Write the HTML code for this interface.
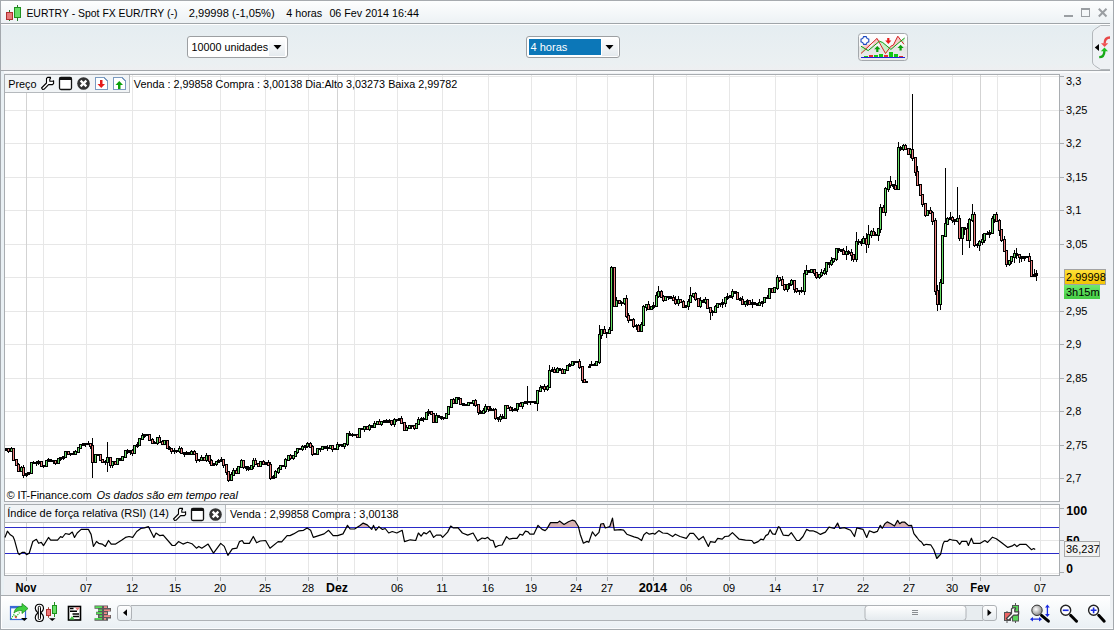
<!DOCTYPE html>
<html><head><meta charset="utf-8">
<style>
html,body{margin:0;padding:0;width:1114px;height:630px;overflow:hidden;background:#eef0f3}
svg{position:absolute;left:0;top:0;display:block}
text{font-family:"Liberation Sans",sans-serif;font-size:11px;fill:#000}
</style></head><body>
<svg width="1114" height="630" viewBox="0 0 1114 630" shape-rendering="crispEdges">
<defs>
<linearGradient id="gTitle" x1="0" y1="0" x2="0" y2="1"><stop offset="0" stop-color="#fdfefe"/><stop offset="1" stop-color="#ecf1f4"/></linearGradient>
<linearGradient id="gTool" x1="0" y1="0" x2="0" y2="1"><stop offset="0" stop-color="#e5edf1"/><stop offset="0.85" stop-color="#ebf0f2"/><stop offset="1" stop-color="#eeeff1"/></linearGradient>
<linearGradient id="gBot" x1="0" y1="0" x2="0" y2="1"><stop offset="0" stop-color="#ffffff"/><stop offset="1" stop-color="#eaf0f4"/></linearGradient>
<linearGradient id="gYel" x1="0" y1="0" x2="0" y2="1"><stop offset="0" stop-color="#ffe23a"/><stop offset="1" stop-color="#f2c200"/></linearGradient>
<linearGradient id="gGrn" x1="0" y1="0" x2="0" y2="1"><stop offset="0" stop-color="#6ee86e"/><stop offset="1" stop-color="#44cc44"/></linearGradient>
<linearGradient id="gBtn" x1="0" y1="0" x2="0" y2="1"><stop offset="0" stop-color="#ffffff"/><stop offset="1" stop-color="#e4eaee"/></linearGradient>
</defs>
<!-- window frame -->
<rect x="0" y="0" width="1114" height="630" fill="#eef0f3"/>
<!-- title bar -->
<rect x="1" y="1" width="1112" height="23" fill="url(#gTitle)"/>
<path d="M0 0.5H1114" stroke="#a7abaf"/>
<path d="M1 23.5H1110" stroke="#a0a5a9"/>
<path d="M1 24.5H1110" stroke="#ffffff"/>
<!-- toolbar -->
<rect x="1" y="25" width="1109" height="45" fill="url(#gTool)"/>
<path d="M1 70.5H1110" stroke="#a4a8ac"/>
<path d="M1 71.5H1110M1 72.5H1110" stroke="#f9fafb"/>
<!-- left strip -->
<rect x="1" y="71" width="3" height="524" fill="#e9f0f4"/>
<!-- bottom toolbar -->
<path d="M1 595.5H1110" stroke="#a9adb1"/>
<rect x="1" y="596" width="1109" height="32" fill="url(#gBot)"/>
<!-- borders -->
<path d="M0.5 0V630" stroke="#a3a8ad"/>
<path d="M1 628.5H1113" stroke="#fbfcfd"/>
<path d="M0 629.5H1114" stroke="#a5aaae"/>
<path d="M1.5 596V628" stroke="#ffffff"/>
<rect x="1110" y="24" width="3" height="604" fill="#eef1f4"/>
<path d="M1113.5 0V630" stroke="#a3a8ad"/>
<rect x="4.5" y="74.5" width="1055" height="427" fill="#fff" stroke="#a9adb1"/><path d="M5 76.5H1059" stroke="#e7e7e7"/><path d="M5 110.5H1059" stroke="#e7e7e7"/><path d="M5 143.5H1059" stroke="#e7e7e7"/><path d="M5 177.5H1059" stroke="#e7e7e7"/><path d="M5 210.5H1059" stroke="#e7e7e7"/><path d="M5 244.5H1059" stroke="#e7e7e7"/><path d="M5 277.5H1059" stroke="#e7e7e7"/><path d="M5 311.5H1059" stroke="#e7e7e7"/><path d="M5 344.5H1059" stroke="#e7e7e7"/><path d="M5 378.5H1059" stroke="#e7e7e7"/><path d="M5 411.5H1059" stroke="#e7e7e7"/><path d="M5 445.5H1059" stroke="#e7e7e7"/><path d="M5 478.5H1059" stroke="#e7e7e7"/><path d="M26.5 75V501" stroke="#d3d3d3"/><path d="M43.5 75V501" stroke="#e7e7e7"/><path d="M86.5 75V501" stroke="#e7e7e7"/><path d="M132.5 75V501" stroke="#e7e7e7"/><path d="M175.5 75V501" stroke="#e7e7e7"/><path d="M220.5 75V501" stroke="#e7e7e7"/><path d="M265.5 75V501" stroke="#e7e7e7"/><path d="M308.5 75V501" stroke="#e7e7e7"/><path d="M337.5 75V501" stroke="#d3d3d3"/><path d="M354.5 75V501" stroke="#e7e7e7"/><path d="M397.5 75V501" stroke="#e7e7e7"/><path d="M442.5 75V501" stroke="#e7e7e7"/><path d="M488.5 75V501" stroke="#e7e7e7"/><path d="M531.5 75V501" stroke="#e7e7e7"/><path d="M576.5 75V501" stroke="#e7e7e7"/><path d="M607.5 75V501" stroke="#e7e7e7"/><path d="M653.5 75V501" stroke="#d3d3d3"/><path d="M686.5 75V501" stroke="#e7e7e7"/><path d="M729.5 75V501" stroke="#e7e7e7"/><path d="M775.5 75V501" stroke="#e7e7e7"/><path d="M817.5 75V501" stroke="#e7e7e7"/><path d="M863.5 75V501" stroke="#e7e7e7"/><path d="M909.5 75V501" stroke="#e7e7e7"/><path d="M952.5 75V501" stroke="#e7e7e7"/><path d="M980.5 75V501" stroke="#d3d3d3"/><path d="M997.5 75V501" stroke="#e7e7e7"/><path d="M1040.5 75V501" stroke="#e7e7e7"/><rect x="4.5" y="504.5" width="1055" height="71" fill="#fff" stroke="#a9adb1"/><path d="M26.5 505V575" stroke="#d3d3d3"/><path d="M43.5 505V575" stroke="#e7e7e7"/><path d="M86.5 505V575" stroke="#e7e7e7"/><path d="M132.5 505V575" stroke="#e7e7e7"/><path d="M175.5 505V575" stroke="#e7e7e7"/><path d="M220.5 505V575" stroke="#e7e7e7"/><path d="M265.5 505V575" stroke="#e7e7e7"/><path d="M308.5 505V575" stroke="#e7e7e7"/><path d="M337.5 505V575" stroke="#d3d3d3"/><path d="M354.5 505V575" stroke="#e7e7e7"/><path d="M397.5 505V575" stroke="#e7e7e7"/><path d="M442.5 505V575" stroke="#e7e7e7"/><path d="M488.5 505V575" stroke="#e7e7e7"/><path d="M531.5 505V575" stroke="#e7e7e7"/><path d="M576.5 505V575" stroke="#e7e7e7"/><path d="M607.5 505V575" stroke="#e7e7e7"/><path d="M653.5 505V575" stroke="#d3d3d3"/><path d="M686.5 505V575" stroke="#e7e7e7"/><path d="M729.5 505V575" stroke="#e7e7e7"/><path d="M775.5 505V575" stroke="#e7e7e7"/><path d="M817.5 505V575" stroke="#e7e7e7"/><path d="M863.5 505V575" stroke="#e7e7e7"/><path d="M909.5 505V575" stroke="#e7e7e7"/><path d="M952.5 505V575" stroke="#e7e7e7"/><path d="M980.5 505V575" stroke="#d3d3d3"/><path d="M997.5 505V575" stroke="#e7e7e7"/><path d="M1040.5 505V575" stroke="#e7e7e7"/><path d="M5 540.5H1059" stroke="#e7e7e7"/><path d="M5 573.5H1059" stroke="#e7e7e7"/><path d="M5 508.5H1059" stroke="#e7e7e7"/><path d="M6.5 449V451M8.5 449V453M11.5 447V451M13.5 449V460M16.5 459V465M18.5 463V472M21.5 466V471M23.5 465V478M26.5 474V477M28.5 473V474M31.5 463V474M33.5 461V464M36.5 461V466M38.5 460V465M41.5 461V466M43.5 466V468M46.5 461V467M48.5 458V462M50.5 459V462M53.5 461V464M55.5 461V465M58.5 458V464M60.5 457V461M63.5 456V460M65.5 451V457M68.5 451V454M70.5 454V456M73.5 451V455M75.5 450V455M78.5 447V452M80.5 444V449M83.5 443V445M85.5 443V447M88.5 441V445M90.5 443V449M92.5 438V478M95.5 455V463M97.5 454V455M100.5 454V461M102.5 459V462M105.5 460V465M107.5 442V472M110.5 457V468M112.5 461V468M115.5 462V464M117.5 459V464M120.5 459V461M122.5 457V461M125.5 451V458M127.5 449V454M130.5 451V455M132.5 449V456M134.5 446V454M137.5 442V448M139.5 438V446M142.5 433V440M144.5 435V438M147.5 435V436M149.5 435V440M152.5 438V443M154.5 441V444M157.5 438V445M159.5 435V443M162.5 440V445M164.5 441V445M167.5 440V449M169.5 446V449M171.5 448V454M174.5 448V454M176.5 451V453M179.5 446V453M181.5 447V454M184.5 452V457M186.5 451V455M189.5 452V454M191.5 450V455M194.5 450V454M196.5 453V463M199.5 460V462M201.5 455V460M204.5 457V461M206.5 453V462M209.5 455V464M211.5 459V465M213.5 464V466M216.5 462V466M218.5 459V462M221.5 457V462M223.5 460V468M226.5 464V475M228.5 471V482M231.5 472V481M233.5 468V476M236.5 468V473M238.5 466V473M241.5 459V468M243.5 461V469M246.5 466V471M248.5 466V471M251.5 466V469M253.5 458V469M255.5 458V464M258.5 464V467M260.5 462V467M263.5 460V465M265.5 462V464M268.5 460V466M270.5 462V480M273.5 475V479M275.5 470V477M278.5 467V474M280.5 465V469M283.5 466V466M285.5 458V469M288.5 456V461M290.5 454V460M293.5 456V460M295.5 452V457M297.5 449V454M300.5 449V450M302.5 445V451M305.5 446V450M307.5 442V448M310.5 442V447M312.5 445V456M315.5 454V455M317.5 449V455M320.5 449V452M322.5 447V449M325.5 447V448M327.5 445V451M330.5 445V448M332.5 446V452M335.5 448V450M337.5 442V449M339.5 444V447M342.5 444V447M344.5 444V449M347.5 433V446M349.5 431V436M352.5 433V437M354.5 435V436M357.5 435V437M359.5 428V437M362.5 428V430M364.5 426V432M367.5 426V430M369.5 424V431M372.5 425V427M374.5 421V427M377.5 422V425M379.5 419V424M381.5 422V426M384.5 421V423M386.5 419V422M389.5 419V423M391.5 420V426M394.5 418V427M396.5 420V422M399.5 419V420M401.5 416V424M404.5 423V431M406.5 425V430M409.5 426V429M411.5 426V429M414.5 426V430M416.5 423V428M418.5 417V425M421.5 417V421M423.5 417V422M426.5 413V420M428.5 409V416M431.5 411V415M433.5 414V422M436.5 413V423M438.5 416V417M441.5 416V420M443.5 417V420M446.5 413V418M448.5 407V415M451.5 399V408M453.5 398V404M456.5 397V403M458.5 398V400M460.5 398V405M463.5 404V405M465.5 405V405M468.5 403V405M470.5 403V404M473.5 400V406M475.5 399V407M478.5 405V415M480.5 410V414M483.5 408V414M485.5 404V413M488.5 407V412M490.5 406V411M493.5 408V410M495.5 408V420M498.5 418V422M500.5 414V422M502.5 414V418M505.5 406V418M507.5 406V409M510.5 406V410M512.5 407V412M515.5 408V411M517.5 404V412M520.5 402V406M522.5 403V409M525.5 401V403M527.5 386V405M530.5 402V405M532.5 401V403M535.5 402V404M537.5 390V411M540.5 385V391M542.5 387V389M544.5 384V392M547.5 385V391M549.5 365V388M552.5 367V372M554.5 367V373M557.5 367V373M559.5 368V370M562.5 368V373M564.5 370V374M567.5 365V370M569.5 363V367M572.5 362V365M574.5 361V365M577.5 361V362M579.5 359V369M582.5 367V383M584.5 379V383M586.5 382V382M589.5 364V368M591.5 361V366M594.5 363V366M596.5 361V366M599.5 325V364M601.5 329V339M604.5 326V334M606.5 333V338M609.5 327V333M611.5 266V331M614.5 267V306M616.5 297V307M619.5 300V304M621.5 301V306M624.5 298V305M626.5 295V318M628.5 313V323M631.5 320V321M633.5 318V328M636.5 324V330M638.5 324V331M641.5 322V332M643.5 305V326M646.5 304V311M648.5 301V310M651.5 306V310M653.5 302V309M656.5 292V307M658.5 286V298M661.5 290V298M663.5 295V302M665.5 296V301M668.5 296V300M670.5 296V299M673.5 295V301M675.5 296V305M678.5 296V306M680.5 299V303M683.5 300V308M685.5 305V308M688.5 299V310M690.5 287V302M693.5 293V298M695.5 292V301M698.5 299V307M700.5 297V308M703.5 299V302M705.5 297V304M707.5 299V308M710.5 307V320M712.5 310V316M715.5 305V312M717.5 304V307M720.5 303V307M722.5 299V308M725.5 297V307M727.5 293V300M730.5 296V298M732.5 289V299M735.5 291V294M737.5 293V299M740.5 297V301M742.5 296V305M745.5 301V307M747.5 299V306M749.5 301V304M752.5 299V308M754.5 302V305M757.5 303V306M759.5 299V306M762.5 301V307M764.5 298V303M767.5 295V298M769.5 288V299M772.5 288V293M774.5 287V293M777.5 275V290M779.5 277V282M782.5 276V286M784.5 284V291M787.5 285V292M789.5 284V289M791.5 279V286M794.5 280V293M796.5 289V293M799.5 290V295M801.5 287V293M804.5 270V295M806.5 265V275M809.5 271V272M811.5 270V273M814.5 270V276M816.5 272V279M819.5 274V279M821.5 269V277M824.5 268V275M826.5 262V275M829.5 263V268M831.5 257V266M833.5 259V263M836.5 249V261M838.5 249V253M841.5 249V252M843.5 248V254M846.5 246V260M848.5 250V255M851.5 249V261M853.5 255V262M856.5 232V262M858.5 239V245M861.5 239V246M863.5 236V244M866.5 233V253M868.5 225V248M871.5 230V238M873.5 228V235M875.5 232V236M878.5 229V241M880.5 204V233M883.5 205V212M885.5 187V216M888.5 182V192M890.5 176V188M893.5 184V189M895.5 180V190M898.5 142V190M900.5 146V151M903.5 144V151M905.5 144V150M908.5 148V155M910.5 148V158M912.5 94V161M915.5 157V176M917.5 166V185M920.5 185V195M922.5 194V207M925.5 204V217M927.5 211V216M930.5 207V214M932.5 211V225M935.5 218V295M937.5 285V311M940.5 279V310M942.5 235V283M945.5 168V236M947.5 217V225M950.5 212V220M952.5 216V223M954.5 219V225M957.5 187V221M959.5 215V241M962.5 228V255M964.5 227V235M967.5 223V241M969.5 218V248M972.5 204V222M974.5 212V247M977.5 243V248M979.5 240V251M982.5 234V245M984.5 234V243M987.5 231V234M989.5 230V238M992.5 216V234M994.5 215V223M996.5 212V221M999.5 219V236M1001.5 229V242M1004.5 236V252M1006.5 251V267M1009.5 260V266M1011.5 257V264M1014.5 250V263M1016.5 248V259M1019.5 254V263M1021.5 256V262M1024.5 256V261M1026.5 256V258M1029.5 253V262M1031.5 261V277M1034.5 269V277M1036.5 270V281" stroke="#000" fill="none"/><path d="M5 448h3v3h-3zM7 448h3v4h-3zM10 448h3v4h-3zM12 448h3v13h-3zM15 459h3v7h-3zM17 464h3v8h-3zM20 467h3v5h-3zM22 467h3v9h-3zM25 473h3v3h-3zM27 472h3v3h-3zM30 462h3v12h-3zM32 462h3v2h-3zM35 462h3v2h-3zM37 461h3v3h-3zM40 461h3v6h-3zM42 465h3v2h-3zM45 460h3v7h-3zM47 459h3v3h-3zM49 459h3v3h-3zM52 460h3v2h-3zM54 460h3v4h-3zM57 458h3v6h-3zM59 457h3v3h-3zM62 456h3v3h-3zM64 451h3v7h-3zM67 451h3v4h-3zM69 453h3v2h-3zM72 453h3v2h-3zM74 451h3v4h-3zM77 447h3v6h-3zM79 444h3v5h-3zM82 443h3v3h-3zM84 443h3v2h-3zM87 443h3v2h-3zM89 443h3v4h-3zM91 445h3v18h-3zM94 454h3v9h-3zM96 454h3v2h-3zM99 454h3v7h-3zM101 459h3v4h-3zM104 461h3v2h-3zM106 457h3v6h-3zM109 457h3v9h-3zM111 461h3v5h-3zM114 461h3v4h-3zM116 458h3v7h-3zM119 458h3v3h-3zM121 456h3v5h-3zM124 450h3v8h-3zM126 450h3v3h-3zM129 450h3v3h-3zM131 450h3v4h-3zM133 445h3v9h-3zM136 444h3v3h-3zM138 438h3v8h-3zM141 435h3v5h-3zM143 434h3v3h-3zM146 434h3v2h-3zM148 434h3v7h-3zM151 439h3v5h-3zM153 442h3v2h-3zM156 437h3v7h-3zM158 437h3v6h-3zM161 441h3v4h-3zM163 440h3v5h-3zM166 440h3v9h-3zM168 447h3v3h-3zM170 448h3v4h-3zM173 450h3v2h-3zM175 450h3v2h-3zM178 448h3v4h-3zM180 448h3v6h-3zM183 452h3v3h-3zM185 452h3v3h-3zM188 452h3v3h-3zM190 451h3v4h-3zM193 451h3v4h-3zM195 453h3v8h-3zM198 459h3v2h-3zM200 457h3v4h-3zM203 457h3v4h-3zM205 455h3v6h-3zM208 455h3v7h-3zM210 460h3v6h-3zM212 463h3v3h-3zM215 461h3v4h-3zM217 460h3v3h-3zM220 459h3v3h-3zM222 459h3v7h-3zM225 464h3v9h-3zM227 471h3v10h-3zM230 474h3v7h-3zM232 470h3v6h-3zM235 470h3v4h-3zM237 466h3v8h-3zM240 460h3v8h-3zM242 460h3v8h-3zM245 466h3v3h-3zM247 467h3v3h-3zM250 465h3v5h-3zM252 460h3v7h-3zM254 460h3v5h-3zM257 463h3v4h-3zM259 461h3v6h-3zM262 461h3v4h-3zM264 462h3v3h-3zM267 462h3v4h-3zM269 464h3v15h-3zM272 476h3v3h-3zM274 471h3v7h-3zM277 468h3v5h-3zM279 465h3v5h-3zM282 465h3v2h-3zM284 459h3v8h-3zM287 455h3v6h-3zM289 455h3v4h-3zM292 455h3v4h-3zM294 451h3v6h-3zM296 448h3v5h-3zM299 448h3v2h-3zM301 446h3v4h-3zM304 445h3v3h-3zM306 443h3v4h-3zM309 443h3v5h-3zM311 446h3v9h-3zM314 453h3v2h-3zM316 448h3v7h-3zM319 448h3v2h-3zM321 446h3v4h-3zM324 446h3v3h-3zM326 447h3v2h-3zM329 445h3v4h-3zM331 445h3v5h-3zM334 448h3v2h-3zM336 444h3v6h-3zM338 444h3v2h-3zM341 444h3v3h-3zM343 443h3v4h-3zM346 433h3v12h-3zM348 433h3v3h-3zM351 434h3v2h-3zM353 434h3v2h-3zM356 434h3v4h-3zM358 428h3v10h-3zM361 428h3v2h-3zM363 426h3v4h-3zM366 426h3v4h-3zM368 425h3v5h-3zM371 425h3v3h-3zM373 423h3v5h-3zM376 421h3v4h-3zM378 421h3v4h-3zM380 421h3v4h-3zM383 420h3v3h-3zM385 420h3v3h-3zM388 420h3v3h-3zM390 420h3v5h-3zM393 419h3v6h-3zM395 419h3v2h-3zM398 418h3v3h-3zM400 418h3v6h-3zM403 422h3v9h-3zM405 427h3v4h-3zM408 425h3v4h-3zM410 425h3v2h-3zM413 425h3v4h-3zM415 423h3v6h-3zM417 419h3v6h-3zM420 418h3v3h-3zM422 418h3v2h-3zM425 412h3v8h-3zM427 411h3v3h-3zM430 411h3v4h-3zM432 413h3v10h-3zM435 415h3v8h-3zM437 415h3v3h-3zM440 416h3v3h-3zM442 417h3v2h-3zM445 413h3v6h-3zM447 406h3v9h-3zM450 399h3v9h-3zM452 399h3v5h-3zM455 397h3v7h-3zM457 397h3v3h-3zM459 398h3v7h-3zM462 403h3v3h-3zM464 404h3v2h-3zM467 402h3v4h-3zM469 402h3v2h-3zM472 400h3v4h-3zM474 400h3v6h-3zM477 404h3v9h-3zM479 411h3v3h-3zM482 410h3v4h-3zM484 406h3v6h-3zM487 406h3v4h-3zM489 408h3v3h-3zM492 409h3v2h-3zM494 409h3v10h-3zM497 417h3v3h-3zM499 416h3v4h-3zM501 416h3v3h-3zM504 405h3v14h-3zM506 405h3v4h-3zM509 407h3v4h-3zM511 409h3v2h-3zM514 408h3v3h-3zM516 403h3v7h-3zM519 403h3v4h-3zM521 402h3v5h-3zM524 401h3v3h-3zM526 401h3v2h-3zM529 401h3v2h-3zM531 401h3v2h-3zM534 401h3v3h-3zM536 390h3v14h-3zM539 387h3v5h-3zM541 386h3v3h-3zM543 386h3v4h-3zM546 386h3v4h-3zM548 370h3v18h-3zM551 369h3v3h-3zM553 369h3v4h-3zM556 368h3v5h-3zM558 368h3v3h-3zM561 369h3v5h-3zM563 369h3v5h-3zM566 365h3v6h-3zM568 364h3v3h-3zM571 361h3v5h-3zM573 361h3v2h-3zM576 361h3v2h-3zM578 361h3v7h-3zM581 366h3v15h-3zM583 379h3v4h-3zM585 381h3v2h-3zM588 366h3v2h-3zM590 364h3v2h-3zM593 364h3v2h-3zM595 361h3v5h-3zM598 334h3v29h-3zM600 329h3v7h-3zM603 329h3v5h-3zM605 332h3v2h-3zM608 329h3v5h-3zM610 267h3v64h-3zM613 267h3v40h-3zM615 300h3v7h-3zM618 300h3v4h-3zM620 302h3v2h-3zM623 298h3v6h-3zM625 298h3v19h-3zM627 315h3v6h-3zM630 319h3v2h-3zM632 319h3v8h-3zM635 325h3v2h-3zM637 325h3v7h-3zM640 324h3v8h-3zM642 306h3v20h-3zM645 304h3v4h-3zM647 304h3v6h-3zM650 306h3v4h-3zM652 305h3v3h-3zM655 295h3v12h-3zM657 291h3v6h-3zM660 291h3v7h-3zM662 296h3v5h-3zM664 296h3v5h-3zM667 296h3v2h-3zM669 296h3v3h-3zM672 297h3v4h-3zM674 299h3v5h-3zM677 299h3v5h-3zM679 299h3v4h-3zM682 301h3v7h-3zM684 305h3v3h-3zM687 301h3v6h-3zM689 295h3v8h-3zM692 293h3v4h-3zM694 293h3v7h-3zM697 298h3v9h-3zM699 300h3v7h-3zM702 300h3v3h-3zM704 299h3v4h-3zM706 299h3v10h-3zM709 307h3v6h-3zM711 311h3v2h-3zM714 306h3v7h-3zM716 303h3v5h-3zM719 303h3v2h-3zM721 302h3v3h-3zM724 297h3v7h-3zM726 296h3v3h-3zM729 295h3v3h-3zM731 291h3v6h-3zM734 291h3v3h-3zM736 292h3v8h-3zM739 298h3v3h-3zM741 299h3v6h-3zM744 301h3v4h-3zM746 300h3v3h-3zM748 300h3v5h-3zM751 302h3v3h-3zM753 302h3v3h-3zM756 303h3v3h-3zM758 302h3v4h-3zM761 301h3v3h-3zM763 297h3v6h-3zM766 297h3v2h-3zM768 288h3v11h-3zM771 288h3v5h-3zM773 287h3v6h-3zM776 277h3v12h-3zM778 277h3v4h-3zM781 279h3v7h-3zM783 284h3v6h-3zM786 284h3v6h-3zM788 283h3v3h-3zM790 280h3v5h-3zM793 280h3v10h-3zM795 288h3v4h-3zM798 290h3v2h-3zM800 290h3v2h-3zM803 273h3v19h-3zM805 270h3v5h-3zM808 270h3v3h-3zM810 269h3v4h-3zM813 269h3v5h-3zM815 272h3v6h-3zM818 274h3v4h-3zM820 272h3v4h-3zM823 270h3v4h-3zM825 262h3v10h-3zM828 262h3v3h-3zM830 260h3v5h-3zM832 258h3v4h-3zM835 248h3v12h-3zM837 248h3v3h-3zM840 249h3v3h-3zM842 250h3v5h-3zM845 251h3v4h-3zM847 251h3v3h-3zM850 252h3v4h-3zM852 254h3v6h-3zM855 241h3v19h-3zM857 241h3v2h-3zM860 241h3v3h-3zM862 238h3v6h-3zM865 238h3v7h-3zM867 234h3v11h-3zM870 231h3v5h-3zM872 231h3v5h-3zM874 234h3v2h-3zM877 228h3v8h-3zM879 207h3v23h-3zM882 207h3v6h-3zM884 188h3v25h-3zM887 181h3v9h-3zM889 181h3v5h-3zM892 184h3v3h-3zM894 185h3v5h-3zM897 147h3v43h-3zM899 147h3v3h-3zM902 145h3v5h-3zM904 145h3v5h-3zM907 148h3v7h-3zM909 149h3v6h-3zM911 149h3v10h-3zM914 157h3v16h-3zM916 171h3v15h-3zM919 184h3v12h-3zM921 194h3v11h-3zM924 203h3v13h-3zM926 210h3v6h-3zM929 210h3v4h-3zM931 212h3v10h-3zM934 220h3v72h-3zM936 290h3v15h-3zM939 282h3v23h-3zM941 235h3v49h-3zM944 223h3v14h-3zM946 218h3v7h-3zM949 217h3v3h-3zM951 217h3v4h-3zM953 219h3v3h-3zM956 218h3v4h-3zM958 218h3v21h-3zM961 227h3v12h-3zM963 227h3v3h-3zM966 228h3v13h-3zM968 219h3v22h-3zM971 214h3v7h-3zM973 214h3v32h-3zM976 244h3v2h-3zM978 241h3v5h-3zM981 239h3v4h-3zM983 233h3v8h-3zM986 233h3v2h-3zM988 232h3v3h-3zM991 218h3v16h-3zM993 214h3v6h-3zM995 214h3v8h-3zM998 220h3v11h-3zM1000 229h3v12h-3zM1003 239h3v13h-3zM1005 250h3v15h-3zM1008 260h3v5h-3zM1010 256h3v6h-3zM1013 253h3v5h-3zM1015 253h3v3h-3zM1018 254h3v4h-3zM1020 256h3v3h-3zM1023 256h3v3h-3zM1025 256h3v2h-3zM1028 256h3v6h-3zM1030 260h3v17h-3zM1033 274h3v3h-3zM1035 273h3v3h-3z" fill="#000"/><path d="M11 449h1v2h-1zM21 468h1v3h-1zM31 463h1v10h-1zM46 461h1v5h-1zM58 459h1v4h-1zM65 452h1v5h-1zM75 452h1v2h-1zM78 448h1v4h-1zM80 445h1v3h-1zM95 455h1v7h-1zM107 458h1v4h-1zM112 462h1v3h-1zM117 459h1v5h-1zM122 457h1v3h-1zM125 451h1v6h-1zM134 446h1v7h-1zM139 439h1v6h-1zM142 436h1v3h-1zM157 438h1v5h-1zM164 441h1v3h-1zM179 449h1v2h-1zM191 452h1v2h-1zM201 458h1v2h-1zM206 456h1v4h-1zM216 462h1v2h-1zM231 475h1v5h-1zM233 471h1v4h-1zM238 467h1v6h-1zM241 461h1v6h-1zM251 466h1v3h-1zM253 461h1v5h-1zM260 462h1v4h-1zM275 472h1v5h-1zM278 469h1v3h-1zM280 466h1v3h-1zM285 460h1v6h-1zM288 456h1v4h-1zM293 456h1v2h-1zM295 452h1v4h-1zM297 449h1v3h-1zM302 447h1v2h-1zM307 444h1v2h-1zM317 449h1v5h-1zM322 447h1v2h-1zM330 446h1v2h-1zM337 445h1v4h-1zM344 444h1v2h-1zM347 434h1v10h-1zM359 429h1v8h-1zM364 427h1v2h-1zM369 426h1v3h-1zM374 424h1v3h-1zM377 422h1v2h-1zM381 422h1v2h-1zM394 420h1v4h-1zM406 428h1v2h-1zM409 426h1v2h-1zM416 424h1v4h-1zM418 420h1v4h-1zM426 413h1v6h-1zM436 416h1v6h-1zM446 414h1v4h-1zM448 407h1v7h-1zM451 400h1v7h-1zM456 398h1v5h-1zM468 403h1v2h-1zM473 401h1v2h-1zM483 411h1v2h-1zM485 407h1v4h-1zM500 417h1v2h-1zM505 406h1v12h-1zM517 404h1v5h-1zM522 403h1v3h-1zM537 391h1v12h-1zM540 388h1v3h-1zM547 387h1v2h-1zM549 371h1v16h-1zM557 369h1v3h-1zM564 370h1v3h-1zM567 366h1v4h-1zM572 362h1v3h-1zM596 362h1v3h-1zM599 335h1v27h-1zM601 330h1v5h-1zM609 330h1v3h-1zM611 268h1v62h-1zM616 301h1v5h-1zM624 299h1v4h-1zM641 325h1v6h-1zM643 307h1v18h-1zM646 305h1v2h-1zM651 307h1v2h-1zM656 296h1v10h-1zM658 292h1v4h-1zM665 297h1v3h-1zM678 300h1v3h-1zM688 302h1v4h-1zM690 296h1v6h-1zM693 294h1v2h-1zM700 301h1v5h-1zM705 300h1v2h-1zM715 307h1v5h-1zM717 304h1v3h-1zM725 298h1v5h-1zM732 292h1v4h-1zM745 302h1v2h-1zM759 303h1v2h-1zM764 298h1v4h-1zM769 289h1v9h-1zM774 288h1v4h-1zM777 278h1v10h-1zM787 285h1v4h-1zM791 281h1v3h-1zM804 274h1v17h-1zM806 271h1v3h-1zM811 270h1v2h-1zM819 275h1v2h-1zM821 273h1v2h-1zM824 271h1v2h-1zM826 263h1v8h-1zM831 261h1v3h-1zM833 259h1v2h-1zM836 249h1v10h-1zM846 252h1v2h-1zM856 242h1v17h-1zM863 239h1v4h-1zM868 235h1v9h-1zM871 232h1v3h-1zM878 229h1v6h-1zM880 208h1v21h-1zM885 189h1v23h-1zM888 182h1v7h-1zM898 148h1v41h-1zM903 146h1v3h-1zM910 150h1v4h-1zM927 211h1v4h-1zM940 283h1v21h-1zM942 236h1v47h-1zM945 224h1v12h-1zM947 219h1v5h-1zM957 219h1v2h-1zM962 228h1v10h-1zM969 220h1v20h-1zM972 215h1v5h-1zM979 242h1v3h-1zM982 240h1v2h-1zM984 234h1v6h-1zM992 219h1v14h-1zM994 215h1v4h-1zM1009 261h1v3h-1zM1011 257h1v4h-1zM1014 254h1v3h-1z" fill="#66e066"/><path d="M8 449h1v2h-1zM13 449h1v11h-1zM16 460h1v5h-1zM18 465h1v6h-1zM23 468h1v7h-1zM41 462h1v4h-1zM55 461h1v2h-1zM68 452h1v2h-1zM90 444h1v2h-1zM92 446h1v16h-1zM100 455h1v5h-1zM102 460h1v2h-1zM110 458h1v7h-1zM115 462h1v2h-1zM132 451h1v2h-1zM149 435h1v5h-1zM152 440h1v3h-1zM159 438h1v4h-1zM162 442h1v2h-1zM167 441h1v7h-1zM171 449h1v2h-1zM181 449h1v4h-1zM194 452h1v2h-1zM196 454h1v6h-1zM204 458h1v2h-1zM209 456h1v5h-1zM211 461h1v4h-1zM223 460h1v5h-1zM226 465h1v7h-1zM228 472h1v8h-1zM236 471h1v2h-1zM243 461h1v6h-1zM255 461h1v3h-1zM258 464h1v2h-1zM263 462h1v2h-1zM268 463h1v2h-1zM270 465h1v13h-1zM290 456h1v2h-1zM310 444h1v3h-1zM312 447h1v7h-1zM332 446h1v3h-1zM357 435h1v2h-1zM367 427h1v2h-1zM379 422h1v2h-1zM391 421h1v3h-1zM401 419h1v4h-1zM404 423h1v7h-1zM414 426h1v2h-1zM431 412h1v2h-1zM433 414h1v8h-1zM453 400h1v3h-1zM460 399h1v5h-1zM475 401h1v4h-1zM478 405h1v7h-1zM488 407h1v2h-1zM495 410h1v8h-1zM507 406h1v2h-1zM510 408h1v2h-1zM520 404h1v2h-1zM544 387h1v2h-1zM554 370h1v2h-1zM562 370h1v3h-1zM579 362h1v5h-1zM582 367h1v13h-1zM584 380h1v2h-1zM604 330h1v3h-1zM614 268h1v38h-1zM619 301h1v2h-1zM626 299h1v17h-1zM628 316h1v4h-1zM633 320h1v6h-1zM638 326h1v5h-1zM648 305h1v4h-1zM661 292h1v5h-1zM663 297h1v3h-1zM673 298h1v2h-1zM675 300h1v3h-1zM680 300h1v2h-1zM683 302h1v5h-1zM695 294h1v5h-1zM698 299h1v7h-1zM707 300h1v8h-1zM710 308h1v4h-1zM737 293h1v6h-1zM742 300h1v4h-1zM749 301h1v3h-1zM772 289h1v3h-1zM779 278h1v2h-1zM782 280h1v5h-1zM784 285h1v4h-1zM794 281h1v8h-1zM796 289h1v2h-1zM814 270h1v3h-1zM816 273h1v4h-1zM843 251h1v3h-1zM851 253h1v2h-1zM853 255h1v4h-1zM866 239h1v5h-1zM873 232h1v3h-1zM883 208h1v4h-1zM890 182h1v3h-1zM895 186h1v3h-1zM905 146h1v3h-1zM908 149h1v5h-1zM912 150h1v8h-1zM915 158h1v14h-1zM917 172h1v13h-1zM920 185h1v10h-1zM922 195h1v9h-1zM925 204h1v11h-1zM930 211h1v2h-1zM932 213h1v8h-1zM935 221h1v70h-1zM937 291h1v13h-1zM952 218h1v2h-1zM959 219h1v19h-1zM967 229h1v11h-1zM974 215h1v30h-1zM996 215h1v6h-1zM999 221h1v9h-1zM1001 230h1v10h-1zM1004 240h1v11h-1zM1006 251h1v13h-1zM1019 255h1v2h-1zM1029 257h1v4h-1zM1031 261h1v15h-1z" fill="#f08080"/><clipPath id="cu"><rect x="0" y="500" width="1060" height="27"/></clipPath><clipPath id="cd"><rect x="0" y="553" width="1060" height="20"/></clipPath><path d="M5 527 L4.9 537.5 L7.4 531.2 L10.3 534.8 L13.0 536.6 L14.4 539.7 L18.0 552.8 L19.3 554.6 L22.4 552.3 L24.7 552.3 L26.5 554.6 L29.2 553.2 L32.8 541.5 L36.4 539.3 L38.6 543.3 L41.3 542.4 L43.5 545.6 L48.5 537.5 L50.7 540.2 L57.5 540.2 L60.6 536.6 L62.4 537.5 L65.5 533.5 L69.1 534.4 L72.3 532.1 L74.5 537.5 L77.2 533.0 L81.2 529.4 L88.4 529.4 L91.1 534.4 L93.4 546.5 L96.5 541.5 L98.7 543.3 L102.2 544.1 L105.4 546.4 L108.5 540.5 L111.2 544.1 L115.6 544.1 L121.9 540.1 L125.5 537.4 L129.1 536.5 L132.7 537.4 L136.7 531.5 L140.8 528.5 L144.4 527.9 L148.5 526.7 L153.9 537.4 L156.0 533.0 L159.6 535.6 L163.2 535.1 L172.2 545.5 L174.9 545.5 L178.5 541.6 L183.0 544.1 L187.5 542.3 L191.9 543.7 L196.4 548.2 L198.8 546.4 L201.8 548.2 L208.1 544.1 L213.5 553.1 L220.7 543.4 L224.3 546.4 L227.9 555.4 L232.3 548.8 L236.8 548.2 L239.5 541.6 L242.2 540.5 L244.0 543.4 L249.4 543.4 L253.3 536.5 L256.6 542.8 L260.2 541.0 L265.6 540.5 L270.0 548.2 L278.1 541.6 L281.7 541.9 L287.1 535.6 L290.0 535.6 L293.6 533.9 L299.0 530.8 L303.5 530.3 L307.1 527.9 L310.6 530.3 L313.3 537.4 L318.7 535.6 L324.1 533.9 L328.6 530.3 L333.1 535.6 L337.6 535.6 L343.0 533.9 L347.5 525.4 L350.1 529.0 L354.6 529.0 L360.0 525.4 L363.2 523.1 L367.2 524.9 L371.7 529.4 L373.5 525.4 L375.8 530.3 L378.9 526.7 L382.5 529.4 L385.2 528.5 L388.7 533.0 L392.3 531.5 L396.8 533.0 L402.2 530.3 L404.5 541.6 L410.3 539.8 L415.7 540.5 L418.4 533.0 L421.1 536.2 L423.8 532.6 L426.4 533.9 L430.0 530.8 L433.6 537.4 L436.3 535.1 L440.8 535.1 L442.6 537.4 L447.6 532.1 L450.7 526.1 L453.4 527.9 L457.9 527.6 L462.4 533.0 L467.7 535.1 L473.1 533.0 L477.6 541.0 L482.1 538.0 L485.0 538.7 L487.7 537.3 L490.4 540.2 L493.1 540.5 L495.4 547.3 L498.5 545.5 L502.1 545.0 L506.5 536.6 L509.2 539.1 L512.8 538.4 L517.0 538.4 L520.0 534.2 L522.7 535.1 L525.4 531.2 L528.1 531.9 L529.9 534.2 L533.8 534.2 L538.0 525.3 L542.1 529.4 L545.1 530.6 L546.9 528.9 L550.5 522.6 L557.7 522.6 L559.5 521.1 L564.0 524.4 L568.5 521.7 L572.1 520.2 L574.8 520.8 L578.4 526.5 L580.2 534.2 L583.4 543.2 L587.0 541.4 L588.8 542.3 L592.4 531.9 L595.4 536.0 L599.0 532.4 L600.8 524.0 L603.5 523.5 L605.3 528.0 L609.8 526.5 L612.5 518.1 L614.3 530.1 L620.5 529.7 L623.6 530.1 L626.8 534.2 L634.0 536.9 L637.6 537.8 L641.6 540.5 L643.9 534.8 L646.6 532.4 L649.3 534.2 L652.9 533.3 L654.7 534.2 L658.8 530.6 L662.7 533.0 L667.2 533.3 L672.6 536.6 L675.3 534.2 L680.0 536.5 L686.3 538.3 L689.9 533.3 L693.5 533.3 L698.9 539.8 L703.3 536.5 L708.4 546.4 L710.5 541.6 L715.0 542.3 L717.7 538.3 L722.2 539.2 L724.9 536.5 L728.5 536.2 L732.4 532.6 L739.2 539.2 L745.5 540.1 L751.8 540.5 L754.0 543.4 L758.1 541.6 L760.8 539.2 L763.5 539.8 L765.8 535.6 L768.0 534.4 L770.1 529.7 L772.5 533.9 L775.2 534.4 L778.4 526.7 L779.6 527.2 L783.2 535.1 L788.6 535.6 L791.3 532.6 L796.7 540.5 L799.4 540.5 L803.0 536.5 L806.6 529.4 L809.3 530.8 L812.9 530.8 L816.4 532.1 L820.4 534.4 L825.4 532.1 L829.0 527.2 L834.4 528.5 L837.6 523.1 L839.8 528.5 L844.3 527.6 L850.6 530.3 L854.5 536.5 L856.8 527.9 L863.1 529.4 L866.7 537.4 L869.4 530.8 L873.9 532.6 L877.3 531.4 L880.3 525.3 L882.3 528.3 L884.9 523.7 L887.2 521.9 L891.0 523.7 L894.5 526.0 L897.6 520.4 L899.7 523.7 L901.7 522.2 L904.8 522.2 L908.6 525.6 L911.6 525.3 L913.9 533.7 L917.0 537.5 L919.3 540.5 L921.5 542.0 L923.8 545.4 L926.1 544.3 L930.7 544.8 L933.8 549.7 L936.8 558.5 L940.6 554.3 L942.9 544.3 L944.4 541.3 L947.5 541.3 L949.8 539.3 L952.8 540.2 L956.6 540.5 L959.7 544.3 L961.7 541.3 L966.6 541.3 L968.4 545.4 L971.4 538.2 L973.4 543.3 L980.3 543.3 L984.9 540.5 L987.6 542.4 L992.5 537.2 L996.3 538.7 L1001.7 542.8 L1007.8 547.4 L1012.3 545.9 L1014.6 544.3 L1016.9 546.6 L1020.0 544.3 L1026.1 544.3 L1031.4 549.7 L1033.7 548.5 L1035.2 549.4 L1035.2 527Z" fill="#d7b3b3" clip-path="url(#cu)" shape-rendering="geometricPrecision"/><path d="M5 553 L4.9 537.5 L7.4 531.2 L10.3 534.8 L13.0 536.6 L14.4 539.7 L18.0 552.8 L19.3 554.6 L22.4 552.3 L24.7 552.3 L26.5 554.6 L29.2 553.2 L32.8 541.5 L36.4 539.3 L38.6 543.3 L41.3 542.4 L43.5 545.6 L48.5 537.5 L50.7 540.2 L57.5 540.2 L60.6 536.6 L62.4 537.5 L65.5 533.5 L69.1 534.4 L72.3 532.1 L74.5 537.5 L77.2 533.0 L81.2 529.4 L88.4 529.4 L91.1 534.4 L93.4 546.5 L96.5 541.5 L98.7 543.3 L102.2 544.1 L105.4 546.4 L108.5 540.5 L111.2 544.1 L115.6 544.1 L121.9 540.1 L125.5 537.4 L129.1 536.5 L132.7 537.4 L136.7 531.5 L140.8 528.5 L144.4 527.9 L148.5 526.7 L153.9 537.4 L156.0 533.0 L159.6 535.6 L163.2 535.1 L172.2 545.5 L174.9 545.5 L178.5 541.6 L183.0 544.1 L187.5 542.3 L191.9 543.7 L196.4 548.2 L198.8 546.4 L201.8 548.2 L208.1 544.1 L213.5 553.1 L220.7 543.4 L224.3 546.4 L227.9 555.4 L232.3 548.8 L236.8 548.2 L239.5 541.6 L242.2 540.5 L244.0 543.4 L249.4 543.4 L253.3 536.5 L256.6 542.8 L260.2 541.0 L265.6 540.5 L270.0 548.2 L278.1 541.6 L281.7 541.9 L287.1 535.6 L290.0 535.6 L293.6 533.9 L299.0 530.8 L303.5 530.3 L307.1 527.9 L310.6 530.3 L313.3 537.4 L318.7 535.6 L324.1 533.9 L328.6 530.3 L333.1 535.6 L337.6 535.6 L343.0 533.9 L347.5 525.4 L350.1 529.0 L354.6 529.0 L360.0 525.4 L363.2 523.1 L367.2 524.9 L371.7 529.4 L373.5 525.4 L375.8 530.3 L378.9 526.7 L382.5 529.4 L385.2 528.5 L388.7 533.0 L392.3 531.5 L396.8 533.0 L402.2 530.3 L404.5 541.6 L410.3 539.8 L415.7 540.5 L418.4 533.0 L421.1 536.2 L423.8 532.6 L426.4 533.9 L430.0 530.8 L433.6 537.4 L436.3 535.1 L440.8 535.1 L442.6 537.4 L447.6 532.1 L450.7 526.1 L453.4 527.9 L457.9 527.6 L462.4 533.0 L467.7 535.1 L473.1 533.0 L477.6 541.0 L482.1 538.0 L485.0 538.7 L487.7 537.3 L490.4 540.2 L493.1 540.5 L495.4 547.3 L498.5 545.5 L502.1 545.0 L506.5 536.6 L509.2 539.1 L512.8 538.4 L517.0 538.4 L520.0 534.2 L522.7 535.1 L525.4 531.2 L528.1 531.9 L529.9 534.2 L533.8 534.2 L538.0 525.3 L542.1 529.4 L545.1 530.6 L546.9 528.9 L550.5 522.6 L557.7 522.6 L559.5 521.1 L564.0 524.4 L568.5 521.7 L572.1 520.2 L574.8 520.8 L578.4 526.5 L580.2 534.2 L583.4 543.2 L587.0 541.4 L588.8 542.3 L592.4 531.9 L595.4 536.0 L599.0 532.4 L600.8 524.0 L603.5 523.5 L605.3 528.0 L609.8 526.5 L612.5 518.1 L614.3 530.1 L620.5 529.7 L623.6 530.1 L626.8 534.2 L634.0 536.9 L637.6 537.8 L641.6 540.5 L643.9 534.8 L646.6 532.4 L649.3 534.2 L652.9 533.3 L654.7 534.2 L658.8 530.6 L662.7 533.0 L667.2 533.3 L672.6 536.6 L675.3 534.2 L680.0 536.5 L686.3 538.3 L689.9 533.3 L693.5 533.3 L698.9 539.8 L703.3 536.5 L708.4 546.4 L710.5 541.6 L715.0 542.3 L717.7 538.3 L722.2 539.2 L724.9 536.5 L728.5 536.2 L732.4 532.6 L739.2 539.2 L745.5 540.1 L751.8 540.5 L754.0 543.4 L758.1 541.6 L760.8 539.2 L763.5 539.8 L765.8 535.6 L768.0 534.4 L770.1 529.7 L772.5 533.9 L775.2 534.4 L778.4 526.7 L779.6 527.2 L783.2 535.1 L788.6 535.6 L791.3 532.6 L796.7 540.5 L799.4 540.5 L803.0 536.5 L806.6 529.4 L809.3 530.8 L812.9 530.8 L816.4 532.1 L820.4 534.4 L825.4 532.1 L829.0 527.2 L834.4 528.5 L837.6 523.1 L839.8 528.5 L844.3 527.6 L850.6 530.3 L854.5 536.5 L856.8 527.9 L863.1 529.4 L866.7 537.4 L869.4 530.8 L873.9 532.6 L877.3 531.4 L880.3 525.3 L882.3 528.3 L884.9 523.7 L887.2 521.9 L891.0 523.7 L894.5 526.0 L897.6 520.4 L899.7 523.7 L901.7 522.2 L904.8 522.2 L908.6 525.6 L911.6 525.3 L913.9 533.7 L917.0 537.5 L919.3 540.5 L921.5 542.0 L923.8 545.4 L926.1 544.3 L930.7 544.8 L933.8 549.7 L936.8 558.5 L940.6 554.3 L942.9 544.3 L944.4 541.3 L947.5 541.3 L949.8 539.3 L952.8 540.2 L956.6 540.5 L959.7 544.3 L961.7 541.3 L966.6 541.3 L968.4 545.4 L971.4 538.2 L973.4 543.3 L980.3 543.3 L984.9 540.5 L987.6 542.4 L992.5 537.2 L996.3 538.7 L1001.7 542.8 L1007.8 547.4 L1012.3 545.9 L1014.6 544.3 L1016.9 546.6 L1020.0 544.3 L1026.1 544.3 L1031.4 549.7 L1033.7 548.5 L1035.2 549.4 L1035.2 553Z" fill="#9fd0b8" clip-path="url(#cd)" shape-rendering="geometricPrecision"/><path d="M5 527.5H1059M5 553.5H1059" stroke="#2a2ac8" stroke-width="1"/><path d="M4.9 537.5 L7.4 531.2 L10.3 534.8 L13.0 536.6 L14.4 539.7 L18.0 552.8 L19.3 554.6 L22.4 552.3 L24.7 552.3 L26.5 554.6 L29.2 553.2 L32.8 541.5 L36.4 539.3 L38.6 543.3 L41.3 542.4 L43.5 545.6 L48.5 537.5 L50.7 540.2 L57.5 540.2 L60.6 536.6 L62.4 537.5 L65.5 533.5 L69.1 534.4 L72.3 532.1 L74.5 537.5 L77.2 533.0 L81.2 529.4 L88.4 529.4 L91.1 534.4 L93.4 546.5 L96.5 541.5 L98.7 543.3 L102.2 544.1 L105.4 546.4 L108.5 540.5 L111.2 544.1 L115.6 544.1 L121.9 540.1 L125.5 537.4 L129.1 536.5 L132.7 537.4 L136.7 531.5 L140.8 528.5 L144.4 527.9 L148.5 526.7 L153.9 537.4 L156.0 533.0 L159.6 535.6 L163.2 535.1 L172.2 545.5 L174.9 545.5 L178.5 541.6 L183.0 544.1 L187.5 542.3 L191.9 543.7 L196.4 548.2 L198.8 546.4 L201.8 548.2 L208.1 544.1 L213.5 553.1 L220.7 543.4 L224.3 546.4 L227.9 555.4 L232.3 548.8 L236.8 548.2 L239.5 541.6 L242.2 540.5 L244.0 543.4 L249.4 543.4 L253.3 536.5 L256.6 542.8 L260.2 541.0 L265.6 540.5 L270.0 548.2 L278.1 541.6 L281.7 541.9 L287.1 535.6 L290.0 535.6 L293.6 533.9 L299.0 530.8 L303.5 530.3 L307.1 527.9 L310.6 530.3 L313.3 537.4 L318.7 535.6 L324.1 533.9 L328.6 530.3 L333.1 535.6 L337.6 535.6 L343.0 533.9 L347.5 525.4 L350.1 529.0 L354.6 529.0 L360.0 525.4 L363.2 523.1 L367.2 524.9 L371.7 529.4 L373.5 525.4 L375.8 530.3 L378.9 526.7 L382.5 529.4 L385.2 528.5 L388.7 533.0 L392.3 531.5 L396.8 533.0 L402.2 530.3 L404.5 541.6 L410.3 539.8 L415.7 540.5 L418.4 533.0 L421.1 536.2 L423.8 532.6 L426.4 533.9 L430.0 530.8 L433.6 537.4 L436.3 535.1 L440.8 535.1 L442.6 537.4 L447.6 532.1 L450.7 526.1 L453.4 527.9 L457.9 527.6 L462.4 533.0 L467.7 535.1 L473.1 533.0 L477.6 541.0 L482.1 538.0 L485.0 538.7 L487.7 537.3 L490.4 540.2 L493.1 540.5 L495.4 547.3 L498.5 545.5 L502.1 545.0 L506.5 536.6 L509.2 539.1 L512.8 538.4 L517.0 538.4 L520.0 534.2 L522.7 535.1 L525.4 531.2 L528.1 531.9 L529.9 534.2 L533.8 534.2 L538.0 525.3 L542.1 529.4 L545.1 530.6 L546.9 528.9 L550.5 522.6 L557.7 522.6 L559.5 521.1 L564.0 524.4 L568.5 521.7 L572.1 520.2 L574.8 520.8 L578.4 526.5 L580.2 534.2 L583.4 543.2 L587.0 541.4 L588.8 542.3 L592.4 531.9 L595.4 536.0 L599.0 532.4 L600.8 524.0 L603.5 523.5 L605.3 528.0 L609.8 526.5 L612.5 518.1 L614.3 530.1 L620.5 529.7 L623.6 530.1 L626.8 534.2 L634.0 536.9 L637.6 537.8 L641.6 540.5 L643.9 534.8 L646.6 532.4 L649.3 534.2 L652.9 533.3 L654.7 534.2 L658.8 530.6 L662.7 533.0 L667.2 533.3 L672.6 536.6 L675.3 534.2 L680.0 536.5 L686.3 538.3 L689.9 533.3 L693.5 533.3 L698.9 539.8 L703.3 536.5 L708.4 546.4 L710.5 541.6 L715.0 542.3 L717.7 538.3 L722.2 539.2 L724.9 536.5 L728.5 536.2 L732.4 532.6 L739.2 539.2 L745.5 540.1 L751.8 540.5 L754.0 543.4 L758.1 541.6 L760.8 539.2 L763.5 539.8 L765.8 535.6 L768.0 534.4 L770.1 529.7 L772.5 533.9 L775.2 534.4 L778.4 526.7 L779.6 527.2 L783.2 535.1 L788.6 535.6 L791.3 532.6 L796.7 540.5 L799.4 540.5 L803.0 536.5 L806.6 529.4 L809.3 530.8 L812.9 530.8 L816.4 532.1 L820.4 534.4 L825.4 532.1 L829.0 527.2 L834.4 528.5 L837.6 523.1 L839.8 528.5 L844.3 527.6 L850.6 530.3 L854.5 536.5 L856.8 527.9 L863.1 529.4 L866.7 537.4 L869.4 530.8 L873.9 532.6 L877.3 531.4 L880.3 525.3 L882.3 528.3 L884.9 523.7 L887.2 521.9 L891.0 523.7 L894.5 526.0 L897.6 520.4 L899.7 523.7 L901.7 522.2 L904.8 522.2 L908.6 525.6 L911.6 525.3 L913.9 533.7 L917.0 537.5 L919.3 540.5 L921.5 542.0 L923.8 545.4 L926.1 544.3 L930.7 544.8 L933.8 549.7 L936.8 558.5 L940.6 554.3 L942.9 544.3 L944.4 541.3 L947.5 541.3 L949.8 539.3 L952.8 540.2 L956.6 540.5 L959.7 544.3 L961.7 541.3 L966.6 541.3 L968.4 545.4 L971.4 538.2 L973.4 543.3 L980.3 543.3 L984.9 540.5 L987.6 542.4 L992.5 537.2 L996.3 538.7 L1001.7 542.8 L1007.8 547.4 L1012.3 545.9 L1014.6 544.3 L1016.9 546.6 L1020.0 544.3 L1026.1 544.3 L1031.4 549.7 L1033.7 548.5 L1035.2 549.4" stroke="#000" stroke-width="1.2" fill="none" stroke-linejoin="round" shape-rendering="geometricPrecision"/><path d="M1060 76.5H1064" stroke="#a9adb1"/><path d="M1060 110.5H1064" stroke="#a9adb1"/><path d="M1060 143.5H1064" stroke="#a9adb1"/><path d="M1060 177.5H1064" stroke="#a9adb1"/><path d="M1060 210.5H1064" stroke="#a9adb1"/><path d="M1060 244.5H1064" stroke="#a9adb1"/><path d="M1060 277.5H1064" stroke="#a9adb1"/><path d="M1060 311.5H1064" stroke="#a9adb1"/><path d="M1060 344.5H1064" stroke="#a9adb1"/><path d="M1060 378.5H1064" stroke="#a9adb1"/><path d="M1060 411.5H1064" stroke="#a9adb1"/><path d="M1060 445.5H1064" stroke="#a9adb1"/><path d="M1060 478.5H1064" stroke="#a9adb1"/><path d="M1060 508.5H1064" stroke="#a9adb1"/><path d="M1060 540.5H1064" stroke="#a9adb1"/><path d="M1060 572.5H1064" stroke="#a9adb1"/><path d="M26.5 577V581" stroke="#a9adb1"/><path d="M86.5 577V581" stroke="#a9adb1"/><path d="M132.5 577V581" stroke="#a9adb1"/><path d="M175.5 577V581" stroke="#a9adb1"/><path d="M220.5 577V581" stroke="#a9adb1"/><path d="M265.5 577V581" stroke="#a9adb1"/><path d="M308.5 577V581" stroke="#a9adb1"/><path d="M337.5 577V581" stroke="#a9adb1"/><path d="M397.5 577V581" stroke="#a9adb1"/><path d="M442.5 577V581" stroke="#a9adb1"/><path d="M488.5 577V581" stroke="#a9adb1"/><path d="M531.5 577V581" stroke="#a9adb1"/><path d="M576.5 577V581" stroke="#a9adb1"/><path d="M607.5 577V581" stroke="#a9adb1"/><path d="M653.5 577V581" stroke="#a9adb1"/><path d="M686.5 577V581" stroke="#a9adb1"/><path d="M729.5 577V581" stroke="#a9adb1"/><path d="M775.5 577V581" stroke="#a9adb1"/><path d="M817.5 577V581" stroke="#a9adb1"/><path d="M863.5 577V581" stroke="#a9adb1"/><path d="M909.5 577V581" stroke="#a9adb1"/><path d="M952.5 577V581" stroke="#a9adb1"/><path d="M980.5 577V581" stroke="#a9adb1"/><path d="M1040.5 577V581" stroke="#a9adb1"/>
<g shape-rendering="geometricPrecision">
<text x="1066" y="85">3,3</text><text x="1066" y="114">3,25</text><text x="1066" y="147">3,2</text><text x="1066" y="181">3,15</text><text x="1066" y="214">3,1</text><text x="1066" y="248">3,05</text><text x="1066" y="281">3</text><text x="1066" y="315">2,95</text><text x="1066" y="348">2,9</text><text x="1066" y="382">2,85</text><text x="1066" y="415">2,8</text><text x="1066" y="449">2,75</text><text x="1066" y="482">2,7</text><text x="1066.3" y="515" font-weight="bold" style="font-size:12px" textLength="20.8" lengthAdjust="spacingAndGlyphs">100</text><text x="1066.3" y="545" font-weight="bold" style="font-size:12px">50</text><text x="1066.3" y="572.5" font-weight="bold" style="font-size:12px">0</text><text x="15.5" y="592" font-weight="bold" style="font-size:12px" textLength="21" lengthAdjust="spacingAndGlyphs">Nov</text><text x="86" y="592" text-anchor="middle">07</text><text x="132" y="592" text-anchor="middle">12</text><text x="175" y="592" text-anchor="middle">15</text><text x="220" y="592" text-anchor="middle">20</text><text x="265" y="592" text-anchor="middle">25</text><text x="308" y="592" text-anchor="middle">28</text><text x="326.0" y="592" font-weight="bold" style="font-size:12px" textLength="22" lengthAdjust="spacingAndGlyphs">Dez</text><text x="397" y="592" text-anchor="middle">06</text><text x="442" y="592" text-anchor="middle">11</text><text x="488" y="592" text-anchor="middle">16</text><text x="531" y="592" text-anchor="middle">19</text><text x="576" y="592" text-anchor="middle">24</text><text x="607" y="592" text-anchor="middle">27</text><text x="638.75" y="592" font-weight="bold" style="font-size:12px" textLength="28.5" lengthAdjust="spacingAndGlyphs">2014</text><text x="686" y="592" text-anchor="middle">06</text><text x="729" y="592" text-anchor="middle">09</text><text x="775" y="592" text-anchor="middle">14</text><text x="818" y="592" text-anchor="middle">17</text><text x="863" y="592" text-anchor="middle">22</text><text x="909" y="592" text-anchor="middle">27</text><text x="952" y="592" text-anchor="middle">30</text><text x="970.25" y="592" font-weight="bold" style="font-size:12px" textLength="19.5" lengthAdjust="spacingAndGlyphs">Fev</text><text x="1040" y="592" text-anchor="middle">07</text>
<!-- title icon -->
<path d="M9.5 10V21M17.5 5V21" stroke="#2a7a2a" stroke-width="1" shape-rendering="crispEdges"/>
<rect x="6.5" y="12.5" width="6" height="7" fill="#e77a7a" stroke="#b03030" shape-rendering="crispEdges"/>
<rect x="14.5" y="7.5" width="6" height="10" fill="#66dd66" stroke="#1f8f1f" shape-rendering="crispEdges"/>
<text x="26.4" y="17" textLength="151" lengthAdjust="spacingAndGlyphs">EURTRY - Spot FX EUR/TRY (-)</text>
<text x="188.7" y="17" textLength="86" lengthAdjust="spacingAndGlyphs">2,99998 (-1,05%)</text>
<text x="286.2" y="17" textLength="36" lengthAdjust="spacingAndGlyphs">4 horas</text>
<text x="329.4" y="17" textLength="89.5" lengthAdjust="spacingAndGlyphs">06 Fev 2014 16:44</text>
<!-- window buttons -->
<g stroke="#9a9ea2" fill="none" shape-rendering="crispEdges">
<path d="M1064 15.5H1073" stroke-width="2"/>
<rect x="1081.5" y="8.5" width="8" height="8"/>
<path d="M1081.5 9.5H1089.5"/>
</g>
<path d="M1098.8 8.8L1106.5 16.5M1106.5 8.8L1098.8 16.5" stroke="#9a9ea2" stroke-width="2" fill="none"/>
<!-- dropdown 1 -->
<rect x="187.5" y="36.5" width="100" height="21" rx="2.5" fill="#fff" stroke="#9c9fa2"/>
<rect x="269" y="38" width="16" height="18" fill="url(#gBtn)"/>
<path d="M273.5 45H281.5L277.5 49.5Z" fill="#000"/>
<text x="191.6" y="51" textLength="76.5" lengthAdjust="spacingAndGlyphs">10000 unidades</text>
<!-- dropdown 2 -->
<rect x="526.5" y="36.5" width="93" height="21" rx="2.5" fill="#fff" stroke="#9c9fa2"/>
<rect x="529" y="39" width="72" height="16" fill="#0c77b8" shape-rendering="crispEdges"/>
<rect x="602" y="38" width="16" height="18" fill="url(#gBtn)"/>
<path d="M605.5 45H613.5L609.5 49.5Z" fill="#000"/>
<text x="530.4" y="51" style="fill:#fff" textLength="37" lengthAdjust="spacingAndGlyphs">4 horas</text>
<!-- indicator button -->
<linearGradient id="gInd" x1="0" y1="0" x2="0" y2="1"><stop offset="0" stop-color="#ffffff"/><stop offset="0.45" stop-color="#f6f6f6"/><stop offset="0.5" stop-color="#e4e4e4"/><stop offset="1" stop-color="#ececec"/></linearGradient>
<rect x="858.5" y="33.5" width="49" height="27" rx="3" fill="url(#gInd)" stroke="#a4a8ac"/>
<g shape-rendering="geometricPrecision">
<path d="M861 53.5L877 38.4L879.5 41.2L861 46.2Z" fill="#f7c9c9"/>
<path d="M861 46.2L868.2 50.6L870 49L861 53.5Z" fill="#c9efc9"/>
<path d="M870 49L877 38.4L879.5 41.2Z" fill="#f7c9c9"/>
<path d="M879.5 41.2L882.7 42.5L890.9 49.4L885.5 53.5Z" fill="#c9efc9"/>
<path d="M890.9 46.2L893.4 45L897.8 36.2L901.5 41.2L899 42.5L890.9 49.4Z" fill="#f7c9c9"/>
<path d="M901.5 41.2L904 44.3L904.7 38L899 42.5Z" fill="#c9efc9"/>
<path d="M861 53.5L877 38.4L885.5 53.5L890.9 46.2L893.4 45L897.8 36.2L901.5 41.2L904 44.3" stroke="#d42020" stroke-width="1" fill="none"/>
<path d="M861 46.2L868.2 50.6L879.5 41.2L882.7 42.5L890.9 49.4L899 42.5L904.7 38" stroke="#10a010" stroke-width="1" fill="none"/>
<path d="M863.6 36.6h2.6l0.8 1.8l1.8 0.8v2.6l-1.8 0.8l-0.8 1.8h-2.6l-0.8-1.8l-1.8-0.8v-2.6l1.8-0.8z" fill="#fff" stroke="#1a48c0" stroke-width="1.1"/>
<path d="M887.2 38h2.2v2.6h2l-3.1 3.3l-3.1-3.3h2z" fill="#e81a1a"/>
<path d="M876.2 51.9h2.2v-2.6h2l-3.1-3.3l-3.1 3.3h2z" fill="#0aa00a"/>
<path d="M899.5 50.6h2.2v-2.6h2l-3.1-3.3l-3.1 3.3h2z" fill="#0aa00a"/>
</g>
<path d="M864 56h4v1h-4zM874 55h4v2h-4zM879 54h4v3h-4zM889 52h4v5h-4zM894 54h4v3h-4z" fill="#12c812" shape-rendering="crispEdges"/>
<path d="M869 55h4v2h-4zM884 55h4v2h-4zM899 56h4v1h-4z" fill="#e03030" shape-rendering="crispEdges"/>
<path d="M861 57.5H905" stroke="#2222d8" shape-rendering="crispEdges"/>
<!-- right flap -->
<path d="M1110 25.5H1100.5L1094.5 29.5Q1092.5 31 1092.5 33V62Q1092.5 64 1094.5 65.5L1100.5 69.5H1110" fill="#eef1f4" stroke="#b3b7bb"/>
<path d="M1099 44V51L1094.8 47.5Z" fill="#000"/>
<path d="M1110 37.5C1107 37.5 1104.6 39.5 1104.6 43.5" stroke="#e84848" stroke-width="2.3" fill="none"/>
<path d="M1101 43.2H1108.2L1104.6 47Z" fill="#f05050"/>
<path d="M1099.2 57.2C1102.5 57.2 1104.4 55.5 1104.4 51" stroke="#18a818" stroke-width="2.3" fill="none"/>
<path d="M1100.8 51.2H1108L1104.5 47.4Z" fill="#22c022"/>
<!-- Preço header box -->
<rect x="5" y="75" width="124" height="18" fill="#f1f4f6" shape-rendering="crispEdges"/>
<path d="M5 92.5H129.5V75" stroke="#b5b9bd" fill="none" shape-rendering="crispEdges"/>
<text x="8.2" y="87.5" textLength="28.3" lengthAdjust="spacingAndGlyphs">Preço</text>
<!-- wrench -->
<path d="M41.5 88L46.5 83L46.5 78.5L47.6 77.4L50.5 77.4L50.5 78.4L49.8 79V81.3L52.8 81.3L53.6 80.8L53.6 83.5L52.5 84.6L48.6 84.6L44.2 89.2L42.6 89.4Z" fill="#fff" stroke="#000" stroke-width="1.1" stroke-linejoin="round"/>
<rect x="59.5" y="77.5" width="12" height="12" rx="1.5" fill="#fff" stroke="#111" stroke-width="1.3"/>
<rect x="59.5" y="77.5" width="12" height="2.5" fill="#111"/>
<circle cx="83.5" cy="83.5" r="6.3" fill="#333"/>
<path d="M80.6 80.6L86.4 86.4M86.4 80.6L80.6 86.4" stroke="#fff" stroke-width="2.2"/>
<path d="M95.5 77.5H104L107.5 81V89.5H95.5Z" fill="#fff" stroke="#7a9ac0" shape-rendering="crispEdges"/>
<path d="M100 80h2.5v4h2.5l-3.75 4l-3.75-4h2.5z" fill="#e51a1a"/>
<path d="M113.5 77.5H122L125.5 81V89.5H113.5Z" fill="#fff" stroke="#7a9ac0" shape-rendering="crispEdges"/>
<path d="M118 89h2.5v-4h2.5l-3.75-4l-3.75 4h2.5z" fill="#0aa00a"/>
<text x="133.8" y="88" textLength="323.5" lengthAdjust="spacingAndGlyphs">Venda : 2,99858 Compra : 3,00138 Dia:Alto 3,03273 Baixa 2,99782</text>
<!-- copyright -->
<text x="6.7" y="498.5" textLength="85" lengthAdjust="spacingAndGlyphs">© IT-Finance.com</text>
<text x="96.4" y="498.5" font-style="italic" textLength="141.5" lengthAdjust="spacingAndGlyphs">Os dados são em tempo real</text>
<!-- RSI header -->
<rect x="5" y="505" width="220" height="17" fill="#f1f4f6" shape-rendering="crispEdges"/>
<path d="M5 522.5H225.5V505" stroke="#b5b9bd" fill="none" shape-rendering="crispEdges"/>
<text x="7.3" y="516.5" textLength="161.5" lengthAdjust="spacingAndGlyphs">Índice de força relativa (RSI) (14)</text>
<g transform="translate(132,431)"><path d="M41.5 88L46.5 83L46.5 78.5L47.6 77.4L50.5 77.4L50.5 78.4L49.8 79V81.3L52.8 81.3L53.6 80.8L53.6 83.5L52.5 84.6L48.6 84.6L44.2 89.2L42.6 89.4Z" fill="#fff" stroke="#000" stroke-width="1.1" stroke-linejoin="round"/></g>
<rect x="191.5" y="508.5" width="12" height="12" rx="1.5" fill="#fff" stroke="#111" stroke-width="1.3"/>
<rect x="191.5" y="508.5" width="12" height="2.5" fill="#111"/>
<circle cx="215.5" cy="514.5" r="6.3" fill="#333"/>
<path d="M212.6 511.6L218.4 517.4M218.4 511.6L212.6 517.4" stroke="#fff" stroke-width="2.2"/>
<text x="230" y="517.5" textLength="168.5" lengthAdjust="spacingAndGlyphs">Venda : 2,99858 Compra : 3,00138</text>
<!-- price labels -->
<rect x="1064.5" y="269.5" width="41" height="15" fill="url(#gYel)" stroke="#a3a3a3" shape-rendering="crispEdges"/>
<text x="1066" y="281">2,99998</text>
<rect x="1064" y="285" width="36" height="14" fill="url(#gGrn)" shape-rendering="crispEdges"/>
<text x="1066" y="295.5">3h15m</text>
<rect x="1064.5" y="541.5" width="35" height="15" fill="#f2f2f2" stroke="#a9a9a9" shape-rendering="crispEdges"/>
<text x="1066" y="553">36,237</text>
<!-- bottom toolbar icons -->
<g shape-rendering="geometricPrecision">
<!-- icon1 -->
<rect x="10.5" y="606.5" width="15" height="13" fill="#fff" stroke="#3a6ad8" stroke-width="1.2"/>
<rect x="10" y="606" width="16" height="2.4" fill="#3a6ad8"/>
<path d="M11 619L14 614.5L16 617L20 612" stroke="#22bb22" stroke-width="1.1" stroke-dasharray="1.2 1" fill="none"/>
<path d="M15 616.5L16.5 618" stroke="#e02020" stroke-width="1.1"/>
<path d="M14 613C15 608 18 606.5 22 606.5V603.5L28 608.5L22 613.5V610.5C19 610.5 16 611 14 613Z" fill="#3ecf3e" stroke="#1f8f1f" stroke-width="0.8"/>
<path d="M21 618H27.5L24.25 621Z" fill="#000"/>
<!-- icon2 chain -->
<path d="M39.4 604.2C36.3 604.2 35.3 606.5 35.3 608.5C35.3 610.5 37 611.8 38 612.8C37 613.8 35.3 615 35.3 617.2C35.3 619.5 36.5 621.5 39.4 621.5C42.3 621.5 43.5 619.5 43.5 617.2C43.5 615 41.8 613.8 40.8 612.8C41.8 611.8 43.5 610.5 43.5 608.5C43.5 606.5 42.5 604.2 39.4 604.2Z" fill="#fff" stroke="#000" stroke-width="1.15"/>
<rect x="38.3" y="606.3" width="2.2" height="13.2" rx="1" fill="#fff" stroke="#000" stroke-width="1"/>
<path d="M48.5 607.5V617.5M54.5 602V617" stroke="#1f8f1f" stroke-width="1"/>
<path d="M48.5 607.5V617.5" stroke="#b03030" stroke-width="1"/>
<rect x="46.5" y="609.5" width="4" height="6" fill="#ee7777" stroke="#b03030"/>
<rect x="52.5" y="605.5" width="4" height="8" fill="#66e066" stroke="#1f8f1f"/>
<path d="M49 618.3H55.5L52.25 621Z" fill="#000"/>
<!-- icon3 -->
<rect x="68.5" y="606.5" width="12" height="13.5" fill="#fff" stroke="#000" stroke-width="1.6"/>
<path d="M70 608.5H73.5M70 611.3H77M72.5 614H79M73 616.6H79" stroke="#000" stroke-width="1.5"/>
<path d="M75 607.5H80L77.5 610.5Z" fill="#ee7777"/>
<path d="M69.5 619.5H74.5L72 616Z" fill="#44cc44"/>
<!-- icon4 order book -->
<path d="M94.5 605.5H108v2.5H111v3.5H108v1H108v2.5H111v3.5H108v2.3H94.5v-2.5H98v-3.5H96v-3H98v-3H94.5Z" fill="#5a5a5a"/>
<path d="M95.2 606.3H102v1.7H95.2zM98.2 609.4H102v1.7H98.2zM96.3 612.2H102v1.7H96.3zM99.4 615.3H102v1.7H99.4zM95.2 618.1H102v1.7H95.2z" fill="#55dd55"/>
<path d="M104 606.3H107v1.7H104zM104 609.4H110.2v1.7H104zM104 612.2H107v1.7H104zM104 615.3H110.2v1.7H104zM104 618.1H106v1.7H104z" fill="#f08a8a"/>
</g>
<!-- scrollbar -->
<rect x="131" y="605.5" width="852" height="15" fill="#e8edf0" shape-rendering="crispEdges"/>
<path d="M131 605.5H983M131 620.5H983" stroke="#aeb2b6" shape-rendering="crispEdges"/>
<rect x="117.5" y="605.5" width="14" height="15" rx="2.5" fill="url(#gBtn)" stroke="#aeb2b6"/>
<path d="M123 612.7L127 609.3V616Z" fill="#000"/>
<rect x="865" y="605.5" width="101" height="15" rx="3" fill="url(#gBtn)" stroke="#aeb2b6"/>
<path d="M912 610.5H918M912 612.5H918M912 614.5H918" stroke="#8a8e92" shape-rendering="crispEdges"/>
<rect x="982.5" y="605.5" width="14" height="15" rx="2.5" fill="url(#gBtn)" stroke="#aeb2b6"/>
<path d="M991.5 612.7L987.5 609.3V616Z" fill="#000"/>
<g shape-rendering="geometricPrecision">
<!-- wrench candles -->
<path d="M1015.5 603V623M1007 611V623" stroke="#555" stroke-width="1"/>
<rect x="1012.5" y="605.5" width="6" height="15.5" fill="#5ad45a" stroke="#555"/>
<rect x="1004.5" y="612.5" width="6" height="8" fill="#ee6666" stroke="#555"/>
<g transform="translate(965,530.5)"><path d="M41.5 88L46.5 83L46.5 78.5L47.6 77.4L50.5 77.4L50.5 78.4L49.8 79V81.3L52.8 81.3L53.6 80.8L53.6 83.5L52.5 84.6L48.6 84.6L44.2 89.2L42.6 89.4Z" fill="#fff" stroke="#444" stroke-width="1.3" stroke-linejoin="round"/></g>
<!-- magnifier arrows -->
<radialGradient id="gSph" cx="0.4" cy="0.4" r="0.6"><stop offset="0" stop-color="#ffffff"/><stop offset="1" stop-color="#8a8a8a"/></radialGradient>
<path d="M1041.5 615.3L1048.4 621.2" stroke="#000" stroke-width="3" stroke-linecap="round"/>
<circle cx="1037" cy="610.3" r="5.2" fill="url(#gSph)" stroke="#333" stroke-width="1"/>
<path d="M1047.4 606V615.5M1031.5 619.2H1040.5" stroke="#1a2ae0" stroke-width="1.3"/>
<path d="M1045 607.5L1047.4 604.5L1049.8 607.5ZM1045 614L1047.4 617L1049.8 614ZM1033 617L1030 619.2L1033 621.4ZM1039 617L1042 619.2L1039 621.4Z" fill="#1a2ae0"/>
<!-- zoom out -->
<path d="M1070.6 615.3L1076.5 621.2" stroke="#000" stroke-width="3" stroke-linecap="round"/>
<circle cx="1065.7" cy="610.3" r="5" fill="#fff" stroke="#222" stroke-width="1.4"/>
<path d="M1062.8 610.3H1068.6" stroke="#1a2ae0" stroke-width="1.6"/>
<!-- zoom in -->
<path d="M1098.7 615.3L1104.2 621.2" stroke="#000" stroke-width="3" stroke-linecap="round"/>
<circle cx="1093.6" cy="610.3" r="5" fill="#fff" stroke="#222" stroke-width="1.4"/>
<path d="M1090.7 610.3H1096.5M1093.6 607.4V613.2" stroke="#1a2ae0" stroke-width="1.6"/>
</g>

</g>
</svg>
</body></html>
